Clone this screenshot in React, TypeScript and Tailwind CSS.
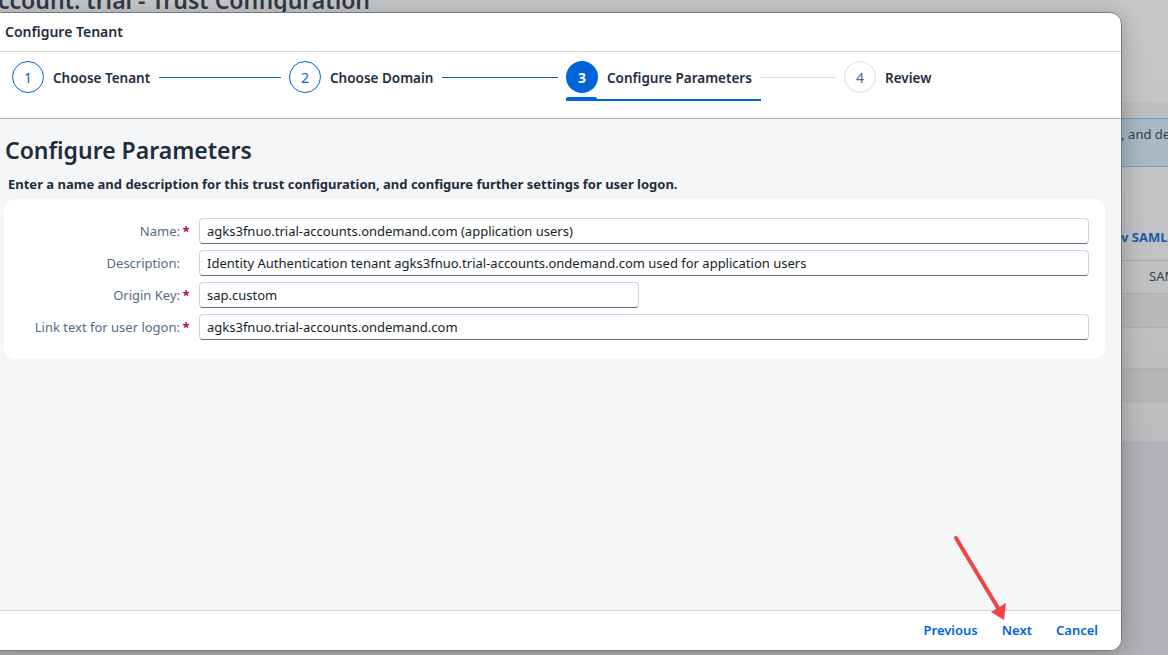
import React from "react";

type Step = { n: number; label: string; state: "done" | "active" | "todo" };

const steps: Step[] = [
  { n: 1, label: "Choose Tenant", state: "done" },
  { n: 2, label: "Choose Domain", state: "done" },
  { n: 3, label: "Configure Parameters", state: "active" },
  { n: 4, label: "Review", state: "todo" },
];

const fields = [
  { label: "Name:", required: true, value: "agks3fnuo.trial-accounts.ondemand.com (application users)", short: false },
  { label: "Description:", required: false, value: "Identity Authentication tenant agks3fnuo.trial-accounts.ondemand.com used for application users", short: false },
  { label: "Origin Key:", required: true, value: "sap.custom", short: true },
  { label: "Link text for user logon:", required: true, value: "agks3fnuo.trial-accounts.ondemand.com", short: false },
];

function StepCircle({ step }: { step: Step }) {
  if (step.state === "active") {
    return (
      <div className="w-[32px] h-[32px] shrink-0 rounded-full bg-[#0064d9] text-white text-[14px] font-bold flex items-center justify-center">
        {step.n}
      </div>
    );
  }
  if (step.state === "done") {
    return (
      <div className="w-[32px] h-[32px] shrink-0 rounded-full border border-[#0064d9] bg-white text-[#0064d9] text-[14px] flex items-center justify-center">
        {step.n}
      </div>
    );
  }
  return (
    <div className="w-[32px] h-[32px] shrink-0 rounded-full border border-[#d9dde2] bg-white text-[#556b82] text-[14px] flex items-center justify-center">
      {step.n}
    </div>
  );
}

export default function App() {
  return (
    <div className="relative w-[1168px] h-[655px] overflow-hidden bg-[#c3c4c6] font-['Noto_Sans',sans-serif]">
      {/* page behind the dialog */}
      <div className="flex flex-col w-full h-full bg-gradient-to-b from-[#c7c8ca] to-[#b5b7b9]">
        <div className="h-[12px] overflow-visible">
          <div className="-mt-[14px] -ml-[2px] text-[23px] leading-[28px] font-semibold text-[#323a44] whitespace-nowrap">
            ccount: trial - Trust Configuration
          </div>
        </div>
        <div className="h-[90px]" />
        <div className="h-[16px] bg-[#bcbec0]" />
        <div className="h-[49px] bg-[#a9b8c4] border-y border-[#6da2c9] pl-[1115px] pt-[6px] text-[13px] text-[#3a4048] whitespace-nowrap overflow-hidden">
          s, and details
        </div>
        <div className="h-[93px] flex items-end pb-[13px] pl-[1121px] text-[13px] font-bold text-[#1b5cab] whitespace-nowrap overflow-hidden">
          v SAML
        </div>
        <div className="h-[33px] border-t border-[#a3a5a8] flex items-center pl-[1149px] text-[13px] text-[#3a4048] whitespace-nowrap overflow-hidden">
          SAML
        </div>
        <div className="h-[34px] bg-[#b7b9bb] border-t border-[#aeb0b2]" />
        <div className="h-[41px] border-t border-[#aeb0b2]" />
        <div className="h-[33px] bg-[#b4b6b8] border-t border-[#aeb0b2]" />
        <div className="h-[40px] border-t border-[#aeb0b2]" />
        <div className="flex-1 bg-[#b0b2b5]" />
      </div>

      {/* dialog */}
      <div className="absolute left-[-12px] top-[12px] w-[1134px] h-[639px] rounded-[12px] bg-white border border-[#767b82] shadow-[0_4px_24px_rgba(0,0,0,0.25)] overflow-hidden flex flex-col text-[#1d2d3e]">
        <div className="h-[39px] shrink-0 border-b border-[#d9d9d9] flex items-center pl-[16px] pb-[1px] text-[14px] font-semibold">
          Configure Tenant
        </div>

        <div className="h-[67px] shrink-0 border-b border-[#a8b3bf] flex pl-[23px] pt-[9px]">
          {steps.map((s, i) => (
            <div
              key={s.n}
              className={
                i === 0 ? "w-[277px] flex items-start" : i === 1 ? "w-[277px] flex items-start" : i === 2 ? "w-[278px] flex items-start" : "flex-1 flex items-start"
              }
            >
              <div className="relative flex items-center h-[32px] pr-[9px]">
                <StepCircle step={s} />
                <span className="ml-[9px] pt-[3px] text-[13.5px] font-semibold text-[#1d2d3e] whitespace-nowrap">{s.label}</span>
                {s.state === "active" && (
                  <>
                    <div className="absolute left-0 right-0 top-[38px] h-[2px] bg-[#0064d9]" />
                    <div className="absolute left-0 w-[31px] top-[36px] h-[4px] rounded-t-[2px] bg-[#0064d9]" />
                  </>
                )}
              </div>
              {i < steps.length - 1 && (
                <div className="flex-1 h-[32px] flex items-center pr-[8px]">
                  <div className={s.state === "done" ? "w-full h-[1px] bg-[#0064d9]" : "w-full h-[1px] bg-[#d9dde2]"} />
                </div>
              )}
            </div>
          ))}
        </div>

        <div className="flex-1 bg-[#f5f6f7] flex flex-col">
          <h1 className="pl-[16px] pt-[16px] text-[23px] leading-[30px] font-semibold text-[#1d2d3e]">Configure Parameters</h1>
          <p className="pl-[19px] pt-[11px] text-[13px] leading-[17px] font-bold text-[#1d2d3e]">
            Enter a name and description for this trust configuration, and configure further settings for user logon.
          </p>
          <div className="ml-[15px] mt-[6px] w-[1101px] rounded-[12px] bg-white pt-[19px] pb-[19px] pr-[16px] flex flex-col gap-[6px]">
            {fields.map((f) => (
              <div key={f.label} className="flex items-center h-[26px]">
                <div className="w-[188px] shrink-0 flex justify-end items-center pt-[1px] text-[13px] text-[#556b82] whitespace-nowrap">
                  <span>{f.label}</span>
                  <span className="w-[12px] text-center text-[#aa0a5e] font-bold">{f.required ? "*" : ""}</span>
                </div>
                <div
                  className={
                    (f.short ? "w-[440px]" : "flex-1") +
                    " ml-[7px] h-[26px] rounded-[4px] border border-[#ccd4dd] border-b-[#556b81] bg-white flex items-center px-[7px] pt-[1px] text-[13px] text-[#131e29] whitespace-nowrap overflow-hidden"
                  }
                >
                  {f.value}
                </div>
              </div>
            ))}
          </div>
        </div>

        <div className="h-[40px] shrink-0 border-t border-[#d9d9d9] bg-white flex items-center justify-end pr-[23px] gap-[24px] text-[13px] font-semibold text-[#0064d9]">
          <span>Previous</span>
          <span>Next</span>
          <span>Cancel</span>
        </div>
      </div>

      {/* annotation arrow */}
      <svg className="absolute inset-0 pointer-events-none" width="1168" height="655" viewBox="0 0 1168 655">
        <line x1="956" y1="538" x2="998" y2="608" stroke="#f04545" strokeWidth="4" strokeLinecap="round" />
        <polygon points="991,612 1006,603 1004,620" fill="#f04545" />
      </svg>
    </div>
  );
}
